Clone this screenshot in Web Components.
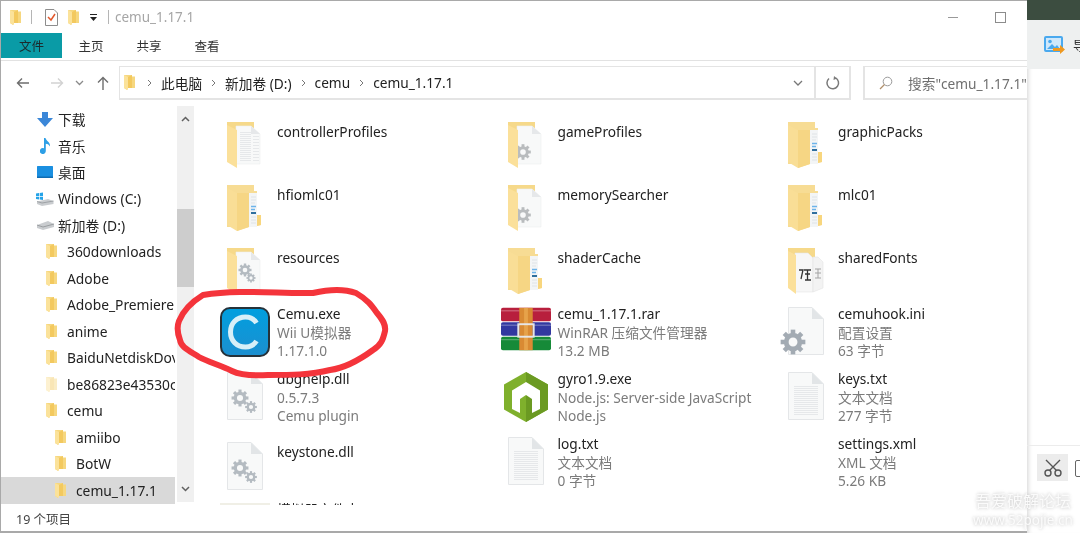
<!DOCTYPE html>
<html lang="zh">
<head>
<meta charset="utf-8">
<title>cemu_1.17.1</title>
<style>
    html, body { margin: 0; height: 533px; overflow: hidden; background: #fff; }
    body { font: 13px "Noto Sans", "Noto Sans CJK SC", sans-serif; color: #222; }
</style>
</head>
<body>
<app-screen>
    <explorer-window>
        <title-bar></title-bar>
        <ribbon-tabs></ribbon-tabs>
        <nav-bar></nav-bar>
        <main-area>
            <nav-tree slot="tree">
                <tree-item icon="download">下载</tree-item>
                <tree-item icon="music">音乐</tree-item>
                <tree-item icon="desktop">桌面</tree-item>
                <tree-item icon="winDrive">Windows (C:)</tree-item>
                <tree-item icon="drive">新加卷 (D:)</tree-item>
                <tree-item level="1">360downloads</tree-item>
                <tree-item level="1">Adobe</tree-item>
                <tree-item level="1">Adobe_Premiere</tree-item>
                <tree-item level="1">anime</tree-item>
                <tree-item level="1">BaiduNetdiskDov</tree-item>
                <tree-item level="1" icon="paleFolder">be86823e43530c</tree-item>
                <tree-item level="1">cemu</tree-item>
                <tree-item level="2">amiibo</tree-item>
                <tree-item level="2">BotW</tree-item>
                <tree-item level="2" selected>cemu_1.17.1</tree-item>
            </nav-tree>
            <file-grid slot="files">
                <file-tile name="controllerProfiles" icon="folderDoc"></file-tile>
                <file-tile name="gameProfiles" icon="folderGear"></file-tile>
                <file-tile name="graphicPacks" icon="folderBlue"></file-tile>
                <file-tile name="hfiomlc01" icon="folderBlue"></file-tile>
                <file-tile name="memorySearcher" icon="folderGear"></file-tile>
                <file-tile name="mlc01" icon="folderBlue"></file-tile>
                <file-tile name="resources" icon="folderGears"></file-tile>
                <file-tile name="shaderCache" icon="folderBlue"></file-tile>
                <file-tile name="sharedFonts" icon="folderFont"></file-tile>
                <file-tile name="Cemu.exe" sub="Wii U模拟器" size="1.17.1.0" icon="cemu"></file-tile>
                <file-tile name="cemu_1.17.1.rar" sub="WinRAR 压缩文件管理器" size="13.2 MB" icon="rar"></file-tile>
                <file-tile name="cemuhook.ini" sub="配置设置" size="63 字节" icon="ini"></file-tile>
                <file-tile name="dbghelp.dll" sub="0.5.7.3" size="Cemu plugin" icon="dll"></file-tile>
                <file-tile name="gyro1.9.exe" sub="Node.js: Server-side JavaScript" size="Node.js" icon="node"></file-tile>
                <file-tile name="keys.txt" sub="文本文档" size="277 字节" icon="txt"></file-tile>
                <file-tile name="keystone.dll" icon="dll"></file-tile>
                <file-tile name="log.txt" sub="文本文档" size="0 字节" icon="txt"></file-tile>
                <file-tile name="settings.xml" sub="XML 文档" size="5.26 KB"></file-tile>
                <file-tile name="模拟器文件夹" icon="paleStrip"></file-tile>
            </file-grid>
        </main-area>
        <status-bar>19 个项目</status-bar>
    </explorer-window>
    <side-panel></side-panel>
    <screen-marks></screen-marks>
</app-screen>

<script>
const smallFolder = (w = 11, h = 15, pale = false) => `
    <svg width="${w}" height="${h}" viewBox="0 0 11 15" style="opacity:${pale ? 0.45 : 1}">
        <path d="M0 0H8V1.5H11V13H3V15L0 13Z" fill="#f6d77f"/>
        <path d="M0 0L4 2V15L0 13Z" fill="#fbe29a"/>
        <path d="M8 0V13H4V2Z" fill="#f3c95f"/>
    </svg>`;

const gear = (x, y, r, color = '#b4bbc1') => {
    let teeth = '';
    for (let a = 0; a < 8; a++) {
        teeth += `<rect x="${x - r * 0.24}" y="${y - r * 1.3}" width="${r * 0.48}" height="${r * 0.6}" fill="${color}" transform="rotate(${a * 45} ${x} ${y})"/>`;
    }
    return `${teeth}<circle cx="${x}" cy="${y}" r="${r * 0.72}" fill="none" stroke="${color}" stroke-width="${r * 0.5}"/>`;
};

const docLines = (y1, y2, x1 = 6, x2 = 30, step = 2) => {
    let out = '';
    for (let y = y1; y <= y2; y += step) out += `<path d="M${x1} ${y + 0.5}H${x2}" stroke="#e6e8ea"/>`;
    return out;
};

const bigFolder = (paper) => `
    <svg width="36" height="46" viewBox="0 0 36 46">
        <path d="M0 0H27V40H0Z" fill="#f6d98a"/>
        <path d="M9 4H24L33 12V42H9Z" fill="#f8f9f9" stroke="#eceeef" stroke-width=".6"/>
        <path d="M24 4V12H33Z" fill="#e6e8ea"/>
        ${paper}
        <path d="M0 3L10 8V46L0 40Z" fill="#fbe09a"/>
    </svg>`;

const blankDoc = (inner) => `
    <svg width="36" height="48" viewBox="0 0 36 48">
        <path d="M.5.5H24L35.5 12V47.5H.5Z" fill="#f8f9f9" stroke="#e4e6e8"/>
        <path d="M24 .5V12H35.5Z" fill="#e2e5e7"/>
        ${inner}
    </svg>`;

const ICONS = {
    folderDoc: bigFolder(docLines(10, 38, 13, 24, 2) + docLines(14, 38, 26, 32, 3)),
    folderGear: bigFolder(gear(15, 30, 6, '#b9bcbe')),
    folderGears: bigFolder(gear(18, 22, 5) + gear(24, 30, 3.5)),
    folderBlue: `<svg width="36" height="46" viewBox="0 0 36 46">
        <path d="M0 0H27V6H30V30H34V40L24 42H0Z" fill="#f7dc94"/>
        <path d="M22 8H30V42H22Z" fill="#f3f5f6"/>
        <path d="M24 12H29M24 15H29M24 18H28" stroke="#dfe3e6"/>
        <path d="M24 21.500H29M24 24.500H28" stroke="#6db4ea" stroke-width="1.500"/>
        <path d="M24 28H29" stroke="#2f6f9e" stroke-width="2"/>
        <path d="M24 32H29M24 35H29M24 38H29" stroke="#dfe3e6"/>
        <path d="M30 30H34V40L30 41Z" fill="#f8d67e"/>
        <path d="M0 3L10 8L22 8V42L10 46L0 40Z" fill="#f9de96"/>
        <path d="M10 8V46L22 42V8Z" fill="#f6d684"/>
    </svg>`,
    folderFont: `<svg width="36" height="46" viewBox="0 0 36 46">
        <path d="M0 0H27V40H0Z" fill="#f6d98a"/>
        <path d="M7 5H20L25 10V44H7Z" fill="#f7f7f7" stroke="#e6e6e6" stroke-width=".6"/>
        <path d="M25 9H30L35 14V40L25 44Z" fill="#f3f3f3" stroke="#e4e4e4" stroke-width=".6"/>
        <path d="M11 22H15L13 31M16 22H23M19.500 22V32M17 26H22M17 32H23" stroke="#333" stroke-width="1.300" fill="none"/>
        <path d="M27 21H33M30 21V30M27 30H33M27 25H33" stroke="#a3a3a3" stroke-width="1" fill="none"/>
        <path d="M0 3L8 7V46L0 40Z" fill="#fbe09a"/>
    </svg>`,
    paleStrip: `<svg width="50" height="8" viewBox="0 0 50 8"><rect y="3" width="50" height="5" fill="#f0efe6"/></svg>`,
    cemu: `<svg width="50" height="50" viewBox="0 0 50 50">
        <defs><linearGradient id="cb" x1="0" y1="0" x2="0" y2="1"><stop offset="0" stop-color="#009fdf"/><stop offset="1" stop-color="#1c8fd0"/></linearGradient></defs>
        <rect x="1" y="1" width="48" height="48" rx="9" fill="url(#cb)" stroke="#26323a" stroke-width="2"/>
        <path d="M36.500 16C34 12 30 10 25.500 10C16.500 10 10.500 16.500 10.500 25C10.500 33.500 16.500 40 25.500 40C30 40 34 38 36.500 34" fill="none" stroke="#d7eff8" stroke-width="5"/>
    </svg>`,
    rar: `<svg width="52" height="45" viewBox="0 0 52 45">
        <rect x="0" y="0" width="52" height="14" rx="2" fill="#b81f3d"/>
        <rect x="0" y="15" width="52" height="14" rx="2" fill="#3238a0"/>
        <rect x="0" y="30" width="52" height="14" rx="2" fill="#168a38"/>
        <path d="M0 3H52M0 18H52M0 33H52" stroke="#ffffff" stroke-opacity=".25" stroke-width="1.500"/>
        <rect x="19" y="0" width="14" height="44" fill="#d98a33"/>
        <rect x="24" y="0" width="4" height="44" fill="#efb25a" opacity=".6"/>
        <rect x="18" y="17" width="16" height="13" fill="none" stroke="#e6e6e6" stroke-width="2"/>
    </svg>`,
    node: `<svg width="44" height="50" viewBox="0 0 44 50">
        <path d="M22 0L44 12.500V37.500L22 50L0 37.500V12.500Z" fill="#7fb02c"/>
        <path d="M22 0L44 12.500V37.500L22 50Z" fill="#6b9a22"/>
        <path d="M22 10L36 18.500V37L28 41V27L22 23L16 27V41L8 37V18.500Z" fill="#fff"/>
    </svg>`,
    ini: `<span style="display:block;position:relative;width:36px;height:48px">${blankDoc('')}
        <svg style="position:absolute;left:-9px;top:20px" width="28" height="30" viewBox="0 0 28 30">${gear(14, 15, 9.500, '#a3abb3')}</svg></span>`,
    dll: blankDoc(gear(13, 26, 6.500) + gear(24, 35, 4.500)),
    txt: blankDoc(docLines(14, 42, 6, 30, 2))
};

class AppScreen extends HTMLElement {
    constructor() {
        super();
        this.attachShadow({ mode: 'open' }).innerHTML = `
            <style>
                :host { display: flex; position: relative; width: 1080px; height: 533px; overflow: hidden; filter: blur(.3px); }
            </style>
            <slot></slot>`;
    }
}

class ExplorerWindow extends HTMLElement {
    constructor() {
        super();
        this.attachShadow({ mode: 'open' }).innerHTML = `
            <style>
                :host {
                    display: flex; flex-direction: column; flex: 0 0 1027px; width: 1027px; min-width: 0; height: 533px;
                    box-sizing: border-box; background: #fff; overflow: hidden;
                    border-top: 1px solid #a9a9a9; border-left: 1px solid #a9a9a9; border-bottom: 2px solid #a9a9a9;
                }
            </style>
            <slot></slot>`;
    }
}

class TitleBar extends HTMLElement {
    constructor() {
        super();
        this.attachShadow({ mode: 'open' }).innerHTML = `
            <style>
                :host { display: flex; align-items: center; height: 32px; flex: none; padding-left: 9px; }
                .sep { width: 1px; height: 14px; background: #b5b5b5; }
                .title { margin-left: 6px; color: #a6a6a6; font-size: 13.500px; }
                .win { margin-left: auto; display: flex; align-items: center; gap: 37px; padding-right: 21px; }
                .min { width: 10px; height: 1px; background: #999; }
                .max { width: 9px; height: 9px; border: 1px solid #8c8c8c; }
                svg { display: block; }
            </style>
            ${smallFolder()}
            <span class="sep" style="margin-left:10px"></span>
            <svg style="margin-left:13px" width="13" height="17" viewBox="0 0 13 17">
                <path d="M.5.5H9L12.500 4V16.500H.5Z" fill="#fff" stroke="#8d8d8d"/>
                <path d="M3 8L6 11L10 5" fill="none" stroke="#e2572b" stroke-width="1.500"/>
            </svg>
            <span style="margin-left:10px;display:flex">${smallFolder()}</span>
            <svg style="margin-left:10px" width="9" height="9" viewBox="0 0 9 9">
                <path d="M1 1.500H8" stroke="#222"/><path d="M1 4H8L4.500 8Z" fill="#222"/>
            </svg>
            <span class="sep" style="margin-left:10px"></span>
            <span class="title">cemu_1.17.1</span>
            <span class="win"><i class="min"></i><i class="max"></i></span>`;
    }
}

class RibbonTabs extends HTMLElement {
    constructor() {
        super();
        this.attachShadow({ mode: 'open' }).innerHTML = `
            <style>
                :host {
                    display: flex; height: 28px; flex: none; box-sizing: border-box;
                    border-bottom: 1px solid #e2e2e2; font-size: 12.5px; color: #333;
                }
                span { display: flex; align-items: center; justify-content: center; height: 25px; width: 58px; }
                .file { width: 61px; background: #0a9ba6; color: #1c2b2d; }
            </style>
            <span class="file">文件</span><span>主页</span><span>共享</span><span>查看</span>`;
    }
}

class NavBar extends HTMLElement {
    constructor() {
        super();
        this.attachShadow({ mode: 'open' }).innerHTML = `
            <style>
                :host { display: flex; align-items: center; height: 34px; flex: none; margin-top: 5px; font-size: 13.700px; color: #222; }
                .arrows { display: flex; align-items: center; width: 118px; flex: none; box-sizing: border-box; padding-left: 15px; }
                .address {
                    display: flex; align-items: center; flex: none; width: 732px; height: 34px; box-sizing: border-box;
                    border: 1px solid #e4e4e4; border-width: 1px 2px 2px 1px; padding-left: 4px;
                }
                .crumb { margin-right: 9px; white-space: nowrap; }
                .gt { margin-right: 9px; display: block; }
                .end { margin-left: auto; display: flex; align-items: center; height: 100%; }
                .refresh { width: 33px; height: 100%; border-left: 2px solid #e4e4e4; display: flex; align-items: center; justify-content: center; margin-left: 11px; }
                .search {
                    flex: 1; min-width: 0; height: 34px; box-sizing: border-box; margin-left: 12px; display: flex; align-items: center;
                    border: 1px solid #e4e4e4; border-width: 1px 0 2px 2px; padding-left: 14px; color: #6f6f6f; white-space: nowrap; overflow: hidden;
                }
            </style>
            <div class="arrows">
                <svg width="14" height="12" viewBox="0 0 14 12"><path d="M13 6H1.500M6 1.500L1.500 6L6 10.500" fill="none" stroke="#6e6e6e" stroke-width="1.400"/></svg>
                <svg style="margin-left:20px" width="14" height="12" viewBox="0 0 14 12"><path d="M1 6H12.500M8 1.500L12.500 6L8 10.500" fill="none" stroke="#d2d2d2" stroke-width="1.400"/></svg>
                <svg style="margin-left:11px" width="9" height="6" viewBox="0 0 9 6"><path d="M1 1L4.500 4.500L8 1" fill="none" stroke="#8a8a8a" stroke-width="1.300"/></svg>
                <svg style="margin-left:13px" width="12" height="14" viewBox="0 0 12 14"><path d="M6 14V1.500M1 6.500L6 1.500L11 6.500" fill="none" stroke="#6e6e6e" stroke-width="1.400"/></svg>
            </div>
            <div class="address">
                ${smallFolder()}
                <svg class="gt" style="margin-left:12px" width="5" height="8" viewBox="0 0 5 8"><path d="M1 1L4 4L1 7" fill="none" stroke="#777"/></svg>
                <span class="crumb">此电脑</span>
                <svg class="gt" width="5" height="8" viewBox="0 0 5 8"><path d="M1 1L4 4L1 7" fill="none" stroke="#777"/></svg>
                <span class="crumb">新加卷 (D:)</span>
                <svg class="gt" width="5" height="8" viewBox="0 0 5 8"><path d="M1 1L4 4L1 7" fill="none" stroke="#777"/></svg>
                <span class="crumb">cemu</span>
                <svg class="gt" width="5" height="8" viewBox="0 0 5 8"><path d="M1 1L4 4L1 7" fill="none" stroke="#777"/></svg>
                <span class="crumb">cemu_1.17.1</span>
                <div class="end">
                    <svg width="10" height="6" viewBox="0 0 10 6"><path d="M1 1L5 5L9 1" fill="none" stroke="#777" stroke-width="1.300"/></svg>
                    <div class="refresh">
                        <svg width="14" height="14" viewBox="0 0 14 14"><path d="M9.500 1.800A5.800 5.800 0 1 1 3 2.500" fill="none" stroke="#7a7a7a" stroke-width="1.500"/><path d="M8 0L11 2.500L7.500 4Z" fill="#7a7a7a"/></svg>
                    </div>
                </div>
            </div>
            <div class="search">
                <svg style="flex:none" width="14" height="14" viewBox="0 0 14 14"><circle cx="8.500" cy="5.500" r="4.300" fill="none" stroke="#9a9a9a"/><path d="M5.500 8.500L1 13" stroke="#b08f6a" stroke-width="1.300"/></svg>
                <span style="margin-left:15px">搜索"cemu_1.17.1"</span>
            </div>`;
    }
}

class MainArea extends HTMLElement {
    constructor() {
        super();
        this.attachShadow({ mode: 'open' }).innerHTML = `
            <style>
                :host { display: flex; flex: 1; min-height: 0; margin-top: 3px; overflow: hidden; }
                .bar {
                    flex: none; width: 17px; margin: 3px 0 0 2px; height: 396px; background: #f0f0f0;
                    display: flex; flex-direction: column; align-items: center;
                }
                .bar svg { margin: 10px 0; flex: none; }
                .thumb { width: 17px; height: 78px; margin-top: 77px; background: #cdcdcd; }
                .fill { flex: 1; }
            </style>
            <slot name="tree"></slot>
            <div class="bar">
                <svg width="9" height="6" viewBox="0 0 9 6"><path d="M1 5L4.500 1.500L8 5" fill="none" stroke="#606060" stroke-width="1.500"/></svg>
                <div class="thumb"></div>
                <div class="fill"></div>
                <svg width="9" height="6" viewBox="0 0 9 6"><path d="M1 1L4.500 4.500L8 1" fill="none" stroke="#606060" stroke-width="1.500"/></svg>
            </div>
            <slot name="files"></slot>`;
    }
}

class NavTree extends HTMLElement {
    constructor() {
        super();
        this.attachShadow({ mode: 'open' }).innerHTML = `
            <style>
                :host { display: block; flex: 0 0 174px; width: 174px; overflow: hidden; padding-top: 3px; }
            </style>
            <slot></slot>`;
    }
}

class TreeItem extends HTMLElement {
    connectedCallback() {
        const level = Number(this.getAttribute('level') || 0);
        const icon = this.getAttribute('icon');
        const pads = [35, 45, 54];
        const gaps = [4, 10, 10];
        this.attachShadow({ mode: 'open' }).innerHTML = `
            <style>
                :host { display: flex; align-items: center; height: 26.5px; white-space: nowrap; overflow: hidden; font-size: 13.800px; color: #222; }
                :host([selected]) { background: #d9d9d9; }
                .icon { flex: none; width: ${level ? 11 : 18}px; display: flex; justify-content: center; }
                svg { display: block; }
            </style>
            <span class="icon" style="margin-left:${pads[level]}px;margin-right:${gaps[level]}px">${this.iconMarkup(icon)}</span>
            <slot></slot>`;
    }

    iconMarkup(icon) {
        switch (icon) {
            case 'download':
                return `<svg width="16" height="15" viewBox="0 0 16 15"><path d="M5 0H11V6H16L8 15L0 6H5Z" fill="#3b87d8"/></svg>`;
            case 'music':
                return `<svg width="11" height="16" viewBox="0 0 11 16"><path d="M4 0H5.500C6 3 10.500 4 10 8.500C9 6.500 7 5.800 5.800 5.800V13A3 3 0 1 1 4 10.300Z" fill="#2d9fe6"/></svg>`;
            case 'desktop':
                return `<svg width="16" height="12" viewBox="0 0 16 12"><rect width="16" height="12" rx=".5" fill="#1a8fe0"/><rect y="10.500" width="16" height="1.500" fill="#0f6cb2"/></svg>`;
            case 'winDrive':
                return `<svg width="18" height="14" viewBox="0 0 18 14"><path d="M1 9.500L12 7L17.500 9V12L6 14L1 12Z" fill="#c9cccf"/><path d="M1 9.500L6 11L17.500 9" fill="none" stroke="#8b8f93" stroke-width=".7"/><path d="M0 1.500L3 1V4H0ZM3.700 1L7 .4V4H3.700ZM0 4.700H3V7.500L0 7ZM3.700 4.700H7V8L3.700 7.500Z" fill="#25a3e8"/></svg>`;
            case 'drive':
                return `<svg width="17" height="9" viewBox="0 0 17 9"><path d="M0 4L11 0L17 3V6L6 9L0 7Z" fill="#c9cccf"/><path d="M0 4L6 6L17 3" fill="none" stroke="#85898d" stroke-width=".7"/></svg>`;
            case 'paleFolder':
                return smallFolder(11, 15, true);
            default:
                return smallFolder();
        }
    }
}

class FileGrid extends HTMLElement {
    constructor() {
        super();
        this.attachShadow({ mode: 'open' }).innerHTML = `
            <style>
                :host {
                    display: grid; flex: 1; min-width: 0; align-self: start;
                    grid-template-columns: repeat(3, 280.5px);
                    grid-template-rows: 63px 63px 64px 65px 65px 58px 60px;
                    padding: 12px 0 0 26px; height: 402px; box-sizing: border-box; overflow: hidden;
                }
            </style>
            <slot></slot>`;
    }
}

class FileTile extends HTMLElement {
    connectedCallback() {
        const name = this.getAttribute('name');
        const sub = this.getAttribute('sub');
        const size = this.getAttribute('size');
        const icon = ICONS[this.getAttribute('icon')] || '';
        const top = sub ? 0 : 8;
        const iconTop = sub ? 2 : 7;
        this.attachShadow({ mode: 'open' }).innerHTML = `
            <style>
                :host { display: flex; min-width: 0; font-size: 13.700px; line-height: 18.700px; color: #222; white-space: nowrap; }
                .pic { flex: none; width: 50px; margin-right: 7px; display: flex; justify-content: center; align-items: flex-start; }
                .pic svg { display: block; }
                .meta { color: #7b7b7b; }
            </style>
            <div class="pic" style="padding-top:${iconTop}px">${icon}</div>
            <div style="padding-top:${top}px">
                <div>${name}</div>
                ${sub ? `<div class="meta">${sub}</div><div class="meta">${size}</div>` : ''}
            </div>`;
    }
}

class StatusBar extends HTMLElement {
    constructor() {
        super();
        this.attachShadow({ mode: 'open' }).innerHTML = `
            <style>
                :host { display: flex; align-items: center; flex: none; height: 26px; padding-left: 15px; font-size: 12.5px; color: #444; background: #fff; }
            </style>
            <slot></slot>`;
    }
}

class SidePanel extends HTMLElement {
    constructor() {
        super();
        this.attachShadow({ mode: 'open' }).innerHTML = `
            <style>
                :host {
                    display: flex; flex-direction: column; flex: 0 0 53px; width: 53px; height: 533px; overflow: hidden;
                    box-shadow: inset 5px 0 5px -4px rgba(0,0,0,.18); background: #fff;
                }
                .head { height: 20px; background: #3c4d40; flex: none; }
                .tools {
                    height: 49px; flex: none; background: #eef0f0; display: flex; align-items: center;
                    padding-left: 17px; font-size: 13px; color: #333; white-space: nowrap;
                }
                .fill { flex: 1; }
                .foot { flex: none; height: 79px; border-top: 1px solid #ececec; display: flex; gap: 7px; padding: 8px 0 0 10px; }
                .cut { flex: none; width: 31px; height: 27px; background: #ececec; display: flex; align-items: center; justify-content: center; }
                .doc { flex: none; width: 12px; height: 15px; margin-top: 6px; border: 1.500px solid #666; border-radius: 2px; }
            </style>
            <div class="head"></div>
            <div class="tools">
                <svg style="flex:none" width="21" height="18" viewBox="0 0 21 18">
                    <rect x="1" y="1" width="17" height="14" rx="1" fill="#cfe8fb" stroke="#4aa9ee" stroke-width="2"/>
                    <circle cx="6" cy="5.500" r="1.800" fill="#4aa9ee"/>
                    <path d="M3 13L8 8L11 11L13 9L16 13Z" fill="#4aa9ee"/>
                    <path d="M9 12H16V9L21 13.500L16 18V15H9Z" fill="#f0991f"/>
                </svg>
                <span style="margin-left:8px">导出</span>
            </div>
            <div class="fill"></div>
            <div class="foot">
                <div class="cut">
                    <svg width="20" height="20" viewBox="0 0 20 20"><circle cx="5" cy="15" r="3" fill="none" stroke="#555" stroke-width="1.400"/><circle cx="15" cy="15" r="3" fill="none" stroke="#555" stroke-width="1.400"/><path d="M6.500 12.500L17 2M13.500 12.500L3 2" stroke="#555" stroke-width="1.400"/></svg>
                </div>
                <div class="doc"></div>
            </div>`;
    }
}

class ScreenMarks extends HTMLElement {
    constructor() {
        super();
        this.attachShadow({ mode: 'open' }).innerHTML = `
            <style>
                :host { position: absolute; inset: 0; display: block; pointer-events: none; }
                svg { position: absolute; left: 0; top: 0; }
                .mark {
                    position: absolute; left: 966px; top: 491px; width: 114px; text-align: center;
                    color: #fbfbfb; text-shadow: 0 0 3px #cfcfcf, 0 0 5px #dcdcdc;
                }
                .cn { font-size: 16px; line-height: 21px; }
                .en { font-size: 13.500px; line-height: 17px; }
            </style>
            <svg width="1080" height="533" viewBox="0 0 1080 533">
                <path d="M203 295C240 289 280 294 313 293C330 289 345 289 356 293C368 300 372 306 377 313C383 320 386 325 385 331C383 340 381 345 373 350C358 361 345 368 330 370C310 375 290 375 268 375C250 376 240 375 232 371C220 365 208 362 199 357C188 350 181 347 180 340C177 332 177 326 179 321C183 311 190 303 203 295Z"
                    fill="none" stroke="#f4343b" stroke-width="6" stroke-linejoin="round"/>
            </svg>
            <div class="mark"><div class="cn">吾爱破解论坛</div><div class="en">www.52pojie.cn</div></div>`;
    }
}

customElements.define('app-screen', AppScreen);
customElements.define('explorer-window', ExplorerWindow);
customElements.define('title-bar', TitleBar);
customElements.define('ribbon-tabs', RibbonTabs);
customElements.define('nav-bar', NavBar);
customElements.define('main-area', MainArea);
customElements.define('nav-tree', NavTree);
customElements.define('tree-item', TreeItem);
customElements.define('file-grid', FileGrid);
customElements.define('file-tile', FileTile);
customElements.define('status-bar', StatusBar);
customElements.define('side-panel', SidePanel);
customElements.define('screen-marks', ScreenMarks);
</script>
</body>
</html>
